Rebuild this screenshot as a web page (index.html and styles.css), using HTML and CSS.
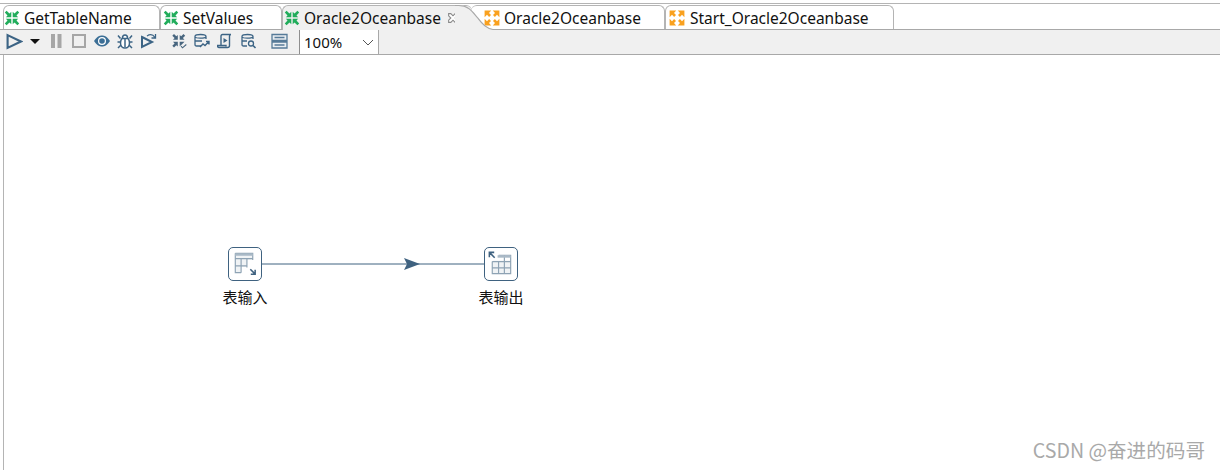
FILE: index.html
```html
<!DOCTYPE html>
<html lang="zh">
<head>
<meta charset="utf-8">
<title>Oracle2Oceanbase</title>
<link rel="stylesheet" href="styles.css">
</head>
<body>
<svg class="defs" width="0" height="0" aria-hidden="true">
  <defs>
    <symbol id="trans" viewBox="0 0 16 16">
      <path d="M7.300 7.300V1.800L5.500 3.500 2.600.8.800 2.600l2.700 2.900-1.700 1.800zM8.700 7.300V1.800l1.800 1.700L13.400.8l1.800 1.800-2.700 2.900 1.700 1.800zM7.300 8.700v5.500l-1.800-1.700-2.900 2.700-1.800-1.800 2.700-2.900-1.700-1.800zM8.700 8.700v5.500l1.800-1.700 2.900 2.700 1.800-1.800-2.700-2.900 1.700-1.800z" fill="#22ad5c"/>
    </symbol>
    <symbol id="job" viewBox="0 0 16 16">
      <path d="M.6 7.200V.6h6.600L5 2.900l2 2.200-1.900 1.900L3 4.800zM15.400 7.200V.6H8.800L11 2.900 9 5.100 10.900 7 13 4.800zM.6 8.800v6.600h6.600L5 13.100l2-2.200L5.100 9 3 11.200zM15.400 8.800v6.600H8.800l2.200-2.300-2-2.200L10.900 9l2.100 2.200z" fill="#f9a11f"/>
    </symbol>
  </defs>
</svg>

<div class="tabbar">
  <div class="tab tab-get"><svg class="tab-icon"><use href="#trans"/></svg><span>GetTableName</span></div>
  <div class="tab tab-set"><svg class="tab-icon"><use href="#trans"/></svg><span>SetValues</span></div>
  <div class="tab tab-active"><svg class="tab-icon"><use href="#trans"/></svg><span>Oracle2Oceanbase</span>
    <svg class="close" viewBox="0 0 11 11"><path d="M1.500 1.500h2l2 2 2-2h2v2l-2 2 2 2v2h-2l-2-2-2 2h-2v-2l2-2-2-2z" fill="#fff" stroke="#8a8a8a"/></svg>
    <svg class="tab-curve" viewBox="0 0 30 26" preserveAspectRatio="none"><path d="M0 0h3c8 0 11 7 15 13 4 7 7 11 12 12v1H0z" fill="#f0f0f0"/><path d="M0 .5h3c8 0 11 7 15 13 4 7 7 11 12 12" fill="none" stroke="#a8a8a8"/></svg>
  </div>
  <div class="tab tab-job"><svg class="tab-icon"><use href="#job"/></svg><span>Oracle2Oceanbase</span></div>
  <div class="tab tab-start"><svg class="tab-icon"><use href="#job"/></svg><span>Start_Oracle2Oceanbase</span></div>
</div>

<div class="toolbar">
  <svg class="tool tool-run" viewBox="0 0 16 16"><path d="M1.500 2l12.500 6-12.500 6z" fill="none" stroke="#3c6485" stroke-width="2"/></svg>
  <svg class="tool-drop" viewBox="0 0 10 5"><path d="M0 0h10L5 5z" fill="#111"/></svg>
  <svg class="tool tool-pause" viewBox="0 0 16 16"><path d="M3 1h4v14H3zM9.500 1h4v14h-4z" fill="#a6a6a6"/></svg>
  <svg class="tool tool-stop" viewBox="0 0 16 16"><path d="M2 2h12v12H2z" fill="none" stroke="#a6a6a6" stroke-width="2"/></svg>
  <svg class="tool tool-eye" viewBox="0 0 18 16"><path d="M1 8c3-4.500 5.500-5.500 8-5.500S14 3.500 17 8c-3 4.500-5.500 5.500-8 5.500S4 12.500 1 8z" fill="#3c6f96"/><circle cx="9" cy="8" r="4" fill="#fff"/><circle cx="9" cy="8" r="2.800" fill="#3c6f96"/></svg>
  <svg class="tool tool-bug" viewBox="0 0 16 16"><path d="M5 5.500h6c1 1 1.500 3 1.500 4.500 0 3-2 5-4.500 5s-4.500-2-4.500-5c0-1.500.5-3.500 1.500-4.500zM5.500 5c0-2 1-3 2.500-3s2.500 1 2.500 3M8 6v8M1 2.500l2.500 3M15 2.500l-2.500 3M.5 9h3M12.500 9h3M1 15l2.500-2.500M15 15l-2.500-2.500" fill="#fff" stroke="#3c6485" stroke-width="1.500"/></svg>
  <svg class="tool tool-step" viewBox="0 0 17 16"><path d="M2 4l10 5-10 5z" fill="none" stroke="#3c6485" stroke-width="2"/><path d="M7 3c3-2 6-1.500 8 1.500M15.500 1v4h-4" fill="none" stroke="#3c6485" stroke-width="1.300"/></svg>
  <svg class="tool tool-check" viewBox="0 0 16 16"><path d="M6.800 6.800V2L5.300 3.300 3 1 1.300 2.700 3.600 5 2 6.800zM8.700 6.800V2l1.500 1.300L12.500 1l1.700 1.700L11.900 5l1.600 1.800zM6.800 8.700v4.800l-1.500-1.300L3 14.500l-1.700-1.700 2.300-2.300L2 8.700zM8.700 8.700h4.800L12 10.200l-1 1-1 1-1.300 1z" fill="#47657e"/><path d="M10 13.200l1.500 1.600 3.800-3.300" fill="none" stroke="#47657e" stroke-width="1.100"/></svg>
  <svg class="tool tool-db" viewBox="0 0 17 16"><path d="M8 13H3.500C2.500 13 2 12.500 2 11.500V3.500C2 2 4 1.500 7.500 1.500S13 2 13 3.500V6M2 4c1 1.500 9.500 1.500 11 0M2 8h7" fill="none" stroke="#3c6485" stroke-width="1.300"/><path d="M7 14l3-3 2 1.500 3.500-3.500M13 8.500h3v3" fill="none" stroke="#3c6485" stroke-width="1.400"/></svg>
  <svg class="tool tool-script" viewBox="0 0 16 16"><path d="M4 13V3c0-1 .5-1.500 1.500-1.500H14c-1 0-1.500.5-1.500 1.500v9.500c0 1-.5 2-2 2H2c-1 0-1.500-.5-1.500-1.500v-.5H9v1" fill="none" stroke="#3c6485" stroke-width="1.400"/><path d="M6.500 5l4 2.500-4 2.500z" fill="#3c6485"/></svg>
  <svg class="tool tool-dbq" viewBox="0 0 17 16"><path d="M7 13H3.500C2.500 13 2 12.500 2 11.500V3.500C2 2 4 1.500 7.500 1.500S13 2 13 3.500V6M2 4c1 1.500 9.500 1.500 11 0M2 8h5" fill="none" stroke="#3c6485" stroke-width="1.300"/><circle cx="11" cy="10.500" r="2.500" fill="none" stroke="#3c6485" stroke-width="1.300"/><path d="M13 12.500l2.500 2.500" stroke="#3c6485" stroke-width="1.600"/></svg>
  <svg class="tool tool-grid" viewBox="0 0 17 16"><path d="M1 1.500h15v6H1zM1 9h15v6H1z" fill="#e8edf1" stroke="#557a98" stroke-width="1.300"/><path d="M3.500 4.500h10M3.500 12h10" stroke="#557a98" stroke-width="1.300"/></svg>
  <div class="zoom-select"><span>100%</span><svg class="chevron" viewBox="0 0 12 7"><path d="M1 1l5 5 5-5" fill="none" stroke="#555"/></svg></div>
</div>

<main class="canvas">
  <svg class="hop" viewBox="0 0 222 16"><path d="M0 8h222" stroke="#3f6280" stroke-width="1"/><path d="M142 2l16 6-16 6 3-6z" fill="#3f6280"/></svg>
  <div class="step step-in">
    <div class="step-box">
      <svg viewBox="0 0 32 32" class="step-icon"><path d="M6.500 5.500h18v7h-6v7h-6v6h-6z" fill="#f0f3f5"/><path d="M6.500 5.500h18v7M6.500 5.500v20h6M6.500 11h18M6.500 18.500h12M12.500 11v14.500M18.500 11v9" fill="none" stroke="#8ea3b4" stroke-width="1.200"/><path d="M6.500 5.500h18v2.500h-18z" fill="#a9b9c6"/><path d="M22 22l4.500 4.500M27 22.500V27h-4.500" fill="none" stroke="#3f6280" stroke-width="1.600"/></svg>
    </div>
    <span class="step-label">表输入</span>
  </div>
  <div class="step step-out">
    <div class="step-box">
      <svg viewBox="0 0 32 32" class="step-icon"><path d="M8 13h18v14H8z" fill="#f0f3f5"/><path d="M14 7.500h12.500v19h-19V14M7.500 14h19M7.500 20.500h19M14 14v12.500M20 8v18.500" fill="none" stroke="#8ea3b4" stroke-width="1.200"/><path d="M13 7.500h13.500v2.500H13z" fill="#a9b9c6"/><path d="M5 5l5 5M4.500 9.500V4.500H9.500" fill="none" stroke="#3f6280" stroke-width="1.600"/></svg>
    </div>
    <span class="step-label">表输出</span>
  </div>
  <span class="watermark">CSDN @奋进的码哥</span>
</main>
</body>
</html>
```
FILE: styles.css
```css
* { box-sizing: border-box; }

html, body {
  margin: 0;
  width: 1220px;
  height: 470px;
  overflow: hidden;
  background: #fff;
  font-family: "Noto Sans CJK SC", "Liberation Sans", sans-serif;
}

body {
  padding-top: 3px;
  display: flex;
  flex-direction: column;
}

.defs { position: absolute; }

.tabbar {
  display: flex;
  height: 27px;
  padding: 1px 0 0 3px;
  background: #fff;
  border-top: 1px solid #b4b4b4;
  border-bottom: 1px solid #a8a8a8;
  font-family: "Noto Sans", "Liberation Sans", sans-serif;
  font-size: 15.500px;
  color: #111;
}

.tab {
  position: relative;
  display: flex;
  flex: none;
  align-items: center;
  height: 24px;
  padding: 1px 0 0 0;
  background: #fff;
  border: 1px solid #b4b4b4;
  border-width: 1px 1px 0 1px;
  border-radius: 6px 6px 0 0;
}

.tab-icon {
  width: 16px;
  height: 16px;
  margin-right: 4px;
  flex: none;
}

.tab-get { width: 157px; }
.tab-set { width: 122px; padding-left: 2px; }

.tab-active {
  width: 190px;
  height: 25px;
  margin-bottom: -1px;
  padding-bottom: 1px;
  padding-left: 1px;
  background: #f0f0f0;
  border-right: 0;
  z-index: 1;
}

.tab-job {
  width: 194px;
  margin-left: -1px;
  padding-left: 13px;
  border-left: 0;
}

.tab-start {
  width: 229px;
  padding-left: 3px;
}

.tab-start .tab-icon { margin-right: 5px; }

.close {
  width: 12px;
  height: 12px;
  margin-left: 6px;
  flex: none;
}

.tab-curve {
  position: absolute;
  left: 172px;
  top: -1px;
  width: 38px;
  height: 25px;
}

.toolbar {
  display: flex;
  align-items: center;
  height: 25px;
  padding: 0 0 2px 6px;
  background: #f0f0f0;
  border-bottom: 1px solid #a8a8a8;
}

.tool { width: 16px; height: 16px; flex: none; }
.tool-run { width: 17px; height: 17px; }
.tool-drop { width: 10px; height: 5px; margin-left: 7px; flex: none; }
.tool-pause { margin-left: 8px; }
.tool-stop { margin-left: 7px; }
.tool-eye { width: 18px; margin-left: 6px; }
.tool-bug { margin-left: 6px; }
.tool-step { width: 17px; margin-left: 7px; }
.tool-check { margin-left: 14px; }
.tool-db { width: 17px; margin-left: 6px; }
.tool-script { margin-left: 7px; }
.tool-dbq { width: 17px; margin-left: 7px; }
.tool-grid { width: 17px; margin-left: 14px; }

.zoom-select {
  display: flex;
  flex: none;
  align-items: center;
  justify-content: space-between;
  width: 80px;
  height: 24px;
  margin: 0 0 -2px 11px;
  padding: 0 4px 0 4px;
  background: #fff;
  border-left: 1px solid #8e8e8e;
  border-right: 1px solid #a8a8a8;
  font-family: "Noto Sans", "Liberation Sans", sans-serif;
  font-size: 15px;
  color: #111;
}

.chevron { width: 12px; height: 7px; }

.canvas {
  position: relative;
  flex: 1;
  margin-left: 3px;
  background: #fff;
  border-left: 1px solid #b4b4b4;
}

.hop {
  position: absolute;
  left: 258px;
  top: 201px;
  width: 222px;
  height: 16px;
}

.step {
  position: absolute;
  top: 192px;
  display: flex;
  flex-direction: column;
  align-items: center;
  width: 60px;
}

.step-in { left: 211px; }
.step-out { left: 467px; }

.step-box {
  width: 34px;
  height: 34px;
  background: #fff;
  border: 1.500px solid #3f6280;
  border-radius: 5px;
}

.step-icon { display: block; width: 31px; height: 31px; }

.step-label {
  margin-top: 6px;
  font-size: 15px;
  line-height: 20px;
  color: #111;
}

.watermark {
  position: absolute;
  right: 15px;
  bottom: 8px;
  font-size: 19.600px;
  line-height: 24px;
  color: #a9a9a9;
}
```
